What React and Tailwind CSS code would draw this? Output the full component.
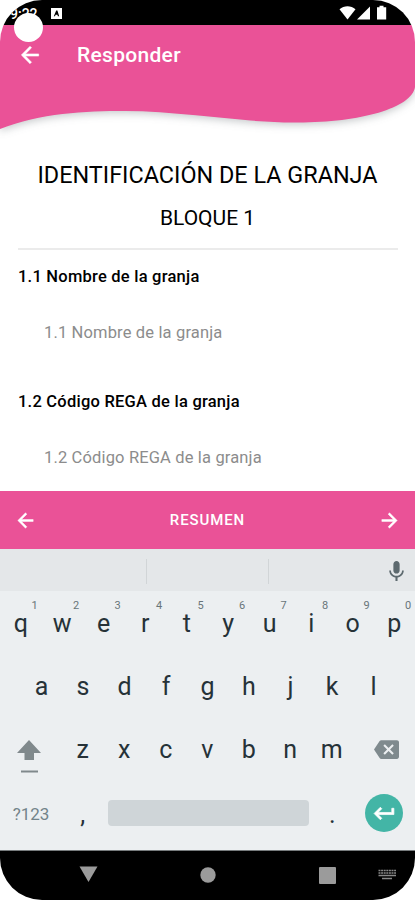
import React, { useState } from 'react';
import { MdMic, MdBackspace } from 'react-icons/md';

const TOP_KEYS = ['q', 'w', 'e', 'r', 't', 'y', 'u', 'i', 'o', 'p'];
const HOME_KEYS = ['a', 's', 'd', 'f', 'g', 'h', 'j', 'k', 'l'];
const BOTTOM_KEYS = ['z', 'x', 'c', 'v', 'b', 'n', 'm'];

const QUESTIONS = [
  { id: 'nombre', label: '1.1 Nombre de la granja' },
  { id: 'rega', label: '1.2 Código REGA de la granja' }
];

// slightly heavier than the stock material arrows
const ArrowIcon = ({ className }) => (
  <svg className={className} viewBox="0 0 24 24" fill="currentColor" stroke="currentColor" strokeWidth="0.5">
    <path d="M20 11H7.83l5.59-5.59L12 4l-8 8 8 8 1.41-1.41L7.83 13H20v-2z" />
  </svg>
);

const ReturnIcon = ({ className }) => (
  <svg className={className} viewBox="0 0 24 24" fill="currentColor" stroke="currentColor" strokeWidth="0.7">
    <path d="M19 7v4H5.83l3.58-3.59L8 6l-6 6 6 6 1.41-1.41L5.83 13H21V7z" />
  </svg>
);

const StatusBar = () => (
  <div className="relative z-10 shrink-0 h-[25px] bg-black flex items-start text-white">
    <span className="pl-[10px] pt-[6px] text-[14px] leading-[16px] font-medium">9:22</span>
    <svg className="ml-[13px] mt-[8px] w-[11px] h-[11px]" viewBox="0 0 11 11">
      <path d="M0 0H11V11H0Z" fill="#fff" />
      <path d="M2.800 8.200L5.200 2.600H6.400L8.200 8.200H6.900L6.400 6.800H4.600L4 8.200Z" fill="#000" />
    </svg>
    <svg className="ml-auto mr-[28px] mt-[5px] w-[48px] h-[15px]" viewBox="0 0 48 15">
      <path d="M0.5 4.2C5 0.1 12 0.1 16.5 4.2L8.5 14.6Z" fill="#fff" />
      <path d="M31 1.5V14.5H18Z" fill="#fff" />
      <path d="M40.5 0.7H44.5V2.3H47.2V14.6H38V2.3H40.5Z" fill="#fff" />
    </svg>
    <span className="absolute left-[14px] top-[13px] w-[29px] h-[29px] rounded-full bg-white" />
  </div>
);

const Header = () => (
  <header className="relative shrink-0 h-[116px] text-white">
    <svg className="absolute left-0 top-0 w-full h-[125px] overflow-visible drop-shadow-[0_2px_4px_rgba(60,70,75,0.3)]" viewBox="0 0 415 125">
      <path d="M0 0H415V62C412 83 360 97.5 298 97.5C240 97.5 180 86 125 86C85 86 40 88 0 104Z" fill="#ea5297" />
    </svg>
    <div className="relative h-[60px] flex items-center pl-[17px]">
      <ArrowIcon className="w-[26px] h-[26px]" />
      <h1 className="ml-[34px] text-[21px] leading-[24px] font-medium tracking-[0.3px]">Responder</h1>
    </div>
  </header>
);

const Question = ({ question, value, onChange }) => (
  <div className="h-[125px] pt-[17px]">
    <label htmlFor={question.id} className="block text-[16.5px] leading-[20px] font-medium tracking-[0.23px] text-black">{question.label}</label>
    <input
      id={question.id}
      value={value}
      onChange={onChange}
      placeholder={question.label}
      className="block mt-[36px] ml-[26px] w-[320px] h-[20px] text-[16.5px] leading-[20px] tracking-[0.15px] outline-none placeholder:text-[#8c8c8c]"
    />
  </div>
);

const Key = ({ char, hint }) => (
  <button type="button" className="relative w-[41.5px] h-[63px] pt-[2px] text-[25px] leading-[61px] text-center text-[#263238]">
    {char}
    {hint && <span className="absolute left-[30.5px] top-[9px] w-[8px] text-[11px] leading-[12px] text-[#687579]">{hint}</span>}
  </button>
);

const Keyboard = () => (
  <div className="shrink-0 h-[301px] bg-[#eceff1]">
    <div className="h-[42px] bg-[#e4e7e9] flex items-center">
      <div className="w-[147px] h-[25px] mt-[3px] border-r border-[#d1d5d7]" />
      <div className="w-[122px] h-[25px] mt-[3px] border-r border-[#d1d5d7]" />
      <MdMic className="ml-auto mr-[6px] mt-[2px] w-[25px] h-[25px] text-[#5c696e]" />
    </div>
    <div className="flex">
      {TOP_KEYS.map((k, i) => <Key key={k} char={k} hint={String((i + 1) % 10)} />)}
    </div>
    <div className="flex justify-center">
      {HOME_KEYS.map(k => <Key key={k} char={k} />)}
    </div>
    <div className="flex">
      <button type="button" className="w-[62px] h-[63px] pl-[17px] pt-[23px] flex items-start">
        <svg className="w-[24px] h-[33px]" viewBox="0 0 24 33" fill="#80898c">
          <path d="M12 0L24 13H17V20H7.500V13H0Z" />
          <path d="M4 30.500H21V32.500H4Z" />
        </svg>
      </button>
      {BOTTOM_KEYS.map(k => <Key key={k} char={k} />)}
      <button type="button" className="flex-1 pl-[5px] pt-[2px] flex justify-center items-center">
        <MdBackspace className="w-[25px] h-[25px] text-[#7f8a8e]" />
      </button>
    </div>
    <div className="h-[66px] flex items-center">
      <span className="w-[62px] pt-[2px] text-center text-[17px] leading-[20px] text-[#73848a]">?123</span>
      <Key char="," />
      <div className="ml-[4px] w-[201px] h-[26px] rounded-[4px] bg-[#cfd5d8]" />
      <div className="ml-[3px]">
        <Key char="." />
      </div>
      <button type="button" className="ml-auto mr-[12px] w-[38px] h-[38px] rounded-full bg-[#43b5a6] text-white flex items-center justify-center">
        <ReturnIcon className="w-[25px] h-[25px]" />
      </button>
    </div>
  </div>
);

const NavBar = () => (
  <div className="shrink-0 h-[50px] bg-black border-t border-[#777b7d]">
    <svg className="w-full h-[49px]" viewBox="0 0 415 49" fill="#9b9b9b">
      <path d="M79.500 15.500H97.500L88.500 31Z" />
      <circle cx="208" cy="24" r="7.700" />
      <rect x="319" y="16" width="17" height="17" rx="1" />
      <path d="M378.500 19.500H396M378.500 22H396" stroke="#888" strokeWidth="1.300" strokeDasharray="2 0.600" />
      <path d="M378.500 24.500H396M382 27.500H392" stroke="#888" strokeWidth="1.300" />
    </svg>
  </div>
);

const App = () => {
  const [answers, setAnswers] = useState({ nombre: '', rega: '' });

  return (
    <div className="w-[415px] h-[900px] bg-white font-['Roboto',sans-serif]">
      <div className="w-full h-full bg-white rounded-[42px] overflow-hidden flex flex-col">
        <StatusBar />
        <Header />

        <main className="flex-1 min-h-0 overflow-hidden px-[18px]">
          <h2 className="mt-[20px] text-center text-[23.4px] leading-[28px] text-black whitespace-nowrap">IDENTIFICACIÓN DE LA GRANJA</h2>
          <h3 className="mt-[16px] text-center text-[21px] leading-[26px] text-black">BLOQUE 1</h3>
          <hr className="mt-[17px] mr-[-1px] border-t-2 border-[#ebebeb]" />
          <form>
            {QUESTIONS.map(q => (
              <Question
                key={q.id}
                question={q}
                value={answers[q.id]}
                onChange={e => setAnswers(prev => ({ ...prev, [q.id]: e.target.value }))}
              />
            ))}
          </form>
        </main>

        <div className="shrink-0 h-[58px] bg-[#ea5297] text-white flex items-center justify-between px-[13.5px]">
          <ArrowIcon className="w-[23px] h-[23px]" />
          <span className="text-[15px] leading-[20px] font-medium tracking-[0.9px]">RESUMEN</span>
          <ArrowIcon className="w-[23px] h-[23px] rotate-180" />
        </div>

        <Keyboard />
        <NavBar />
      </div>
    </div>
  );
};

export default App;
